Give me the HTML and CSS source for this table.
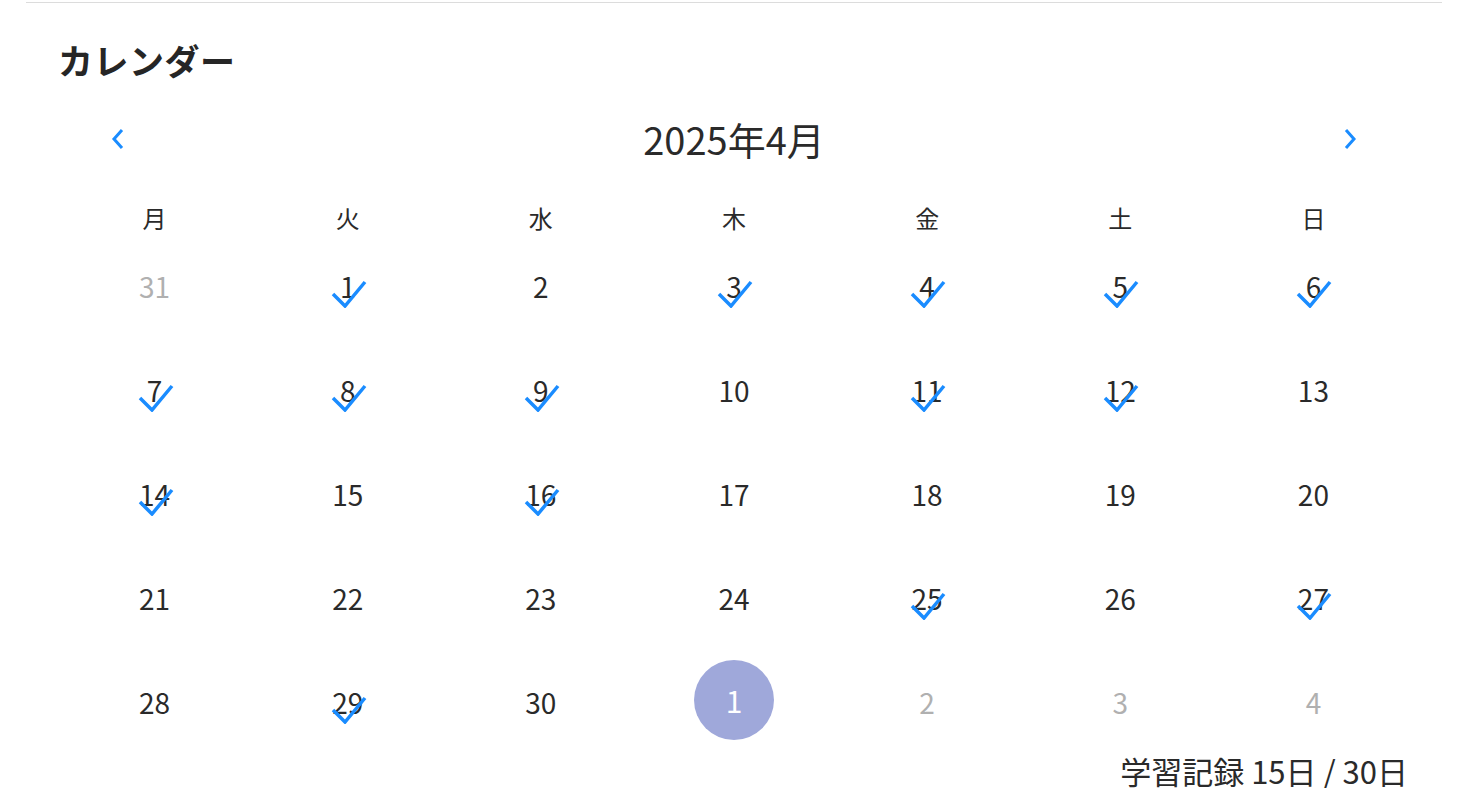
FILE: index.html
```html
<!DOCTYPE html>
<html lang="ja">
<head>
<meta charset="utf-8">
<title>カレンダー</title>
<link rel="stylesheet" href="styles.css">
</head>
<body>
<section class="card">
  <h2 class="title">カレンダー</h2>
  <div class="month-bar">
    <button class="nav" aria-label="前の月">
      <svg width="14" height="22" viewBox="0 0 14 22"><polyline points="11,2 3,11 11,20" fill="none" stroke="#1a8cff" stroke-width="3"/></svg>
    </button>
    <div class="month">2025年4月</div>
    <button class="nav" aria-label="次の月">
      <svg width="14" height="22" viewBox="0 0 14 22"><polyline points="3,2 11,11 3,20" fill="none" stroke="#1a8cff" stroke-width="3"/></svg>
    </button>
  </div>
  <div class="weekdays">
    <div>月</div><div>火</div><div>水</div><div>木</div><div>金</div><div>土</div><div>日</div>
  </div>
  <div class="days">
    <div class="day dim">31</div>
    <div class="day done">1</div>
    <div class="day">2</div>
    <div class="day done">3</div>
    <div class="day done">4</div>
    <div class="day done">5</div>
    <div class="day done">6</div>

    <div class="day done">7</div>
    <div class="day done">8</div>
    <div class="day done">9</div>
    <div class="day">10</div>
    <div class="day done">11</div>
    <div class="day done">12</div>
    <div class="day">13</div>

    <div class="day done">14</div>
    <div class="day">15</div>
    <div class="day done">16</div>
    <div class="day">17</div>
    <div class="day">18</div>
    <div class="day">19</div>
    <div class="day">20</div>

    <div class="day">21</div>
    <div class="day">22</div>
    <div class="day">23</div>
    <div class="day">24</div>
    <div class="day done">25</div>
    <div class="day">26</div>
    <div class="day done">27</div>

    <div class="day">28</div>
    <div class="day done">29</div>
    <div class="day">30</div>
    <div class="day"><span class="today">1</span></div>
    <div class="day dim">2</div>
    <div class="day dim">3</div>
    <div class="day dim">4</div>
  </div>
  <div class="summary">学習記録 15日 / 30日</div>
</section>
<script>
document.querySelectorAll('.day.done').forEach(function (d) {
  d.insertAdjacentHTML('beforeend',
    '<svg class="check" width="36" height="28" viewBox="0 0 36 28"><polyline points="2,14 14,26 34,2" fill="none" stroke="#1a8cff" stroke-width="3.5"/></svg>');
});
</script>
</body>
</html>
```
FILE: styles.css
```css
html, body {
  margin: 0;
  padding: 0;
  background: #fff;
}
body {
  font-family: "Noto Sans CJK JP", "Noto Sans", sans-serif;
  color: #2a2a2a;
}
.card {
  width: 1352px;
  margin: 2px 0 0 26px;
  padding: 0 32px;
  border-top: 1px solid #dcdcdc;
}
.title {
  margin: 0;
  padding-top: 31px;
  font-size: 35px;
  line-height: 51px;
  font-weight: 700;
  color: #262626;
  letter-spacing: 0.5px;
}
.month-bar {
  display: flex;
  align-items: center;
  justify-content: space-between;
  height: 56px;
  margin-top: 28px;
  padding: 0 53px;
}
.nav {
  border: 0;
  background: none;
  padding: 0;
  width: 14px;
  height: 22px;
  display: flex;
  cursor: pointer;
  position: relative;
  top: -2px;
}
.month {
  font-size: 38px;
  line-height: 56px;
  color: #2a2a2a;
  position: relative;
  top: -2px;
}
.weekdays {
  display: grid;
  grid-template-columns: repeat(7, 1fr);
  height: 32px;
  margin-top: 33px;
  font-size: 24px;
  line-height: 32px;
  text-align: center;
  color: #2a2a2a;
}
.days {
  display: grid;
  grid-template-columns: repeat(7, 1fr);
  grid-auto-rows: 104px;
}
.day {
  position: relative;
  display: flex;
  align-items: center;
  justify-content: center;
  font-size: 28px;
  color: #2a2a2a;
}
.day.dim {
  color: #b0b0b0;
}
.today {
  width: 80px;
  height: 80px;
  border-radius: 50%;
  background: #9fa8da;
  color: #fff;
  display: flex;
  align-items: center;
  justify-content: center;
  margin-top: -5px;
  font-size: 30px;
}
.check {
  position: absolute;
  left: calc(50% - 17px);
  top: calc(50% - 6px);
}
.summary {
  text-align: right;
  font-size: 31px;
  line-height: 34px;
  color: #2a2a2a;
  padding-right: 2px;
}
```
